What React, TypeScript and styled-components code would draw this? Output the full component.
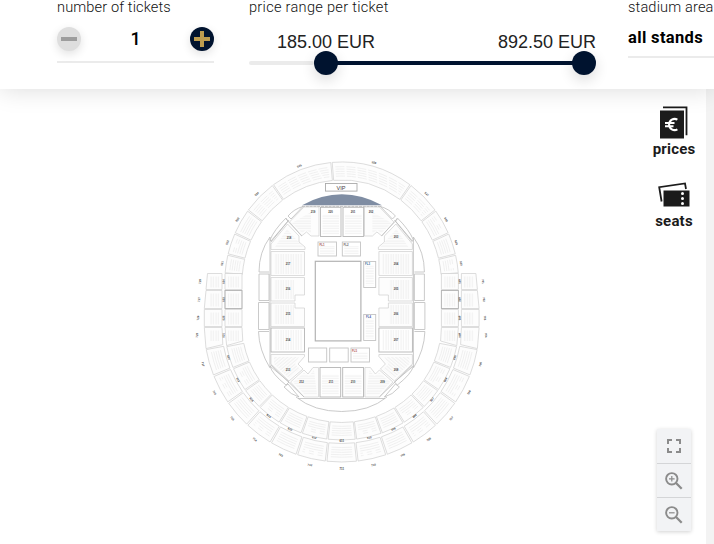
import React from "react";
import styled, { createGlobalStyle } from "styled-components";

const CX = 341.7;

type Ring = { cy: number; rx: number; ry: number };

const topOuter: Ring = { cy: 283, rx: 117, ry: 121 };
const topInner: Ring = { cy: 283, rx: 99.7, ry: 103 };
const lowInner: Ring = { cy: 325, rx: 99.7, ry: 97.5 };
const lowOuter: Ring = { cy: 325, rx: 117, ry: 115 };
const endInner: Ring = { cy: 325, rx: 120, ry: 118.5 };
const endOuter: Ring = { cy: 325, rx: 137.7, ry: 137 };

// 0 is the top of the ring, angles run clockwise
const at = (r: Ring, deg: number) => {
  const a = (deg * Math.PI) / 180;
  return `${(CX + r.rx * Math.sin(a)).toFixed(2)} ${(r.cy - r.ry * Math.cos(a)).toFixed(2)}`;
};

const block = (o: Ring, i: Ring, from: number, to: number) =>
  `M${at(o, from)}A${o.rx} ${o.ry} 0 0 1 ${at(o, to)}L${at(i, to)}A${i.rx} ${i.ry} 0 0 0 ${at(i, from)}Z`;

const topStops = [-85.5, -76.4, -65.8, -53.2, -36, -5, 36, 53.2, 65.8, 76.4, 85.5];
const lowStops = [100.5, 112, 124.5, 135.5, 148, 160, 173, 187, 200, 212, 224.5, 235.5, 248, 259.5];
const endStops = [100, 111.7, 124.5, 136.7, 149, 161, 173.5, 186.5, 199, 211, 223.3, 235.5, 248.3, 260];

const RingBlocks = ({ o, i, stops, first, labelGap }: { o: Ring; i: Ring; stops: number[]; first: number; labelGap: number }) => (
  <>
    {stops.slice(1).map((to, n) => {
      const from = stops[n];
      const mid = (from + to) / 2;
      const big = { cy: o.cy, rx: o.rx + labelGap, ry: o.ry + labelGap };
      const [x, y] = at(big, mid).split(" ").map(Number);
      const rows = [0.22, 0.35, 0.48, 0.61, 0.74].map((k) => ({
        cy: o.cy,
        rx: i.rx + (o.rx - i.rx) * k,
        ry: i.ry + (o.ry - i.ry) * k,
      }));
      return (
        <g key={to}>
          <Block d={block(o, i, from + 0.35, to - 0.35)} />
          {rows.map((r, k) => (
            <SeatRow
              key={k}
              dash={to - from > 15 ? "9 2" : k > 2 && n % 2 ? "5 4" : "none"}
              d={`M${at(r, from + 1.8)}A${r.rx} ${r.ry} 0 0 1 ${at(r, to - 1.8)}`}
            />
          ))}
          <Num x={x} y={y} transform={`rotate(${mid > 90 && mid < 270 ? mid - 180 : mid} ${x} ${y})`}>
            {first + n}
          </Num>
        </g>
      );
    })}
  </>
);

// sections of the left half, the right half is the same set flipped
const halfBlocks = [
  "M271 251.5H304.5V275.5H271Z",
  "M271 277.5H304.5V295H295V301H271Z",
  "M271 303H295V308H304.5V326.5H271Z",
  "M271 249.5V244L287.5 224L299 236V242L305 247V249.5Z",
  "M289.5 222L304 207H319V236H311L306.5 232L301.5 236Z",
  "M271 354.5H304.5V356.5L298 364L303 369L289 381L271 364Z",
  "M290.5 382L304 370L308 374L313 367.5H318.5V397H304Z",
];

const halfLines = [
  "M270 237V367",
  "M271 242L289 220",
  "M269 274H259V300.5H269Z",
  "M269 302.5H258.5V329.5H269Z",
  "M269 331.5H258.5Q259 350 270 368",
  "M270 237Q259 252 259 272H269",
  "M270 240Q274 230 286 218L288 221L271 241Z",
  "M288 216Q294 209 303 206.5L291 219Z",
  "M270 366Q272 374 286 385L289 382Z",
  "M284 387Q291 395 299 397L288 384Z",
  "M271 365L304 397M286 219L302 236",
];

const sideBlocks = [
  "M225 273.5H242V289.5H225Z",
  "M225 290.5H242V308.5H225Z",
  "M225 309.5H242V326.5H225Z",
  "M225 327.5H242L242.8 341L226.6 345.6Z",
  "M207.5 273.5H222V289.5H206Z",
  "M206 290.5H222V308.5H204.3Z",
  "M204.3 309.5H222V326.5H204.3Z",
  "M204.3 327.5H222L222.8 344.6L206 348.6Z",
];

const smallBoxes = [
  [318, 242, 18.5, 14],
  [342.3, 242, 18.2, 14],
  [363.7, 261.5, 12, 26],
  [363.7, 314.5, 12, 26],
  [308.5, 348, 18.2, 14],
  [329.7, 348, 18.5, 14],
  [351, 348, 18.5, 14],
];

const seatFills = [
  [274, 254, 28, 20],
  [274, 280, 20, 19],
  [274, 305, 20, 19],
  [274, 330, 28, 20],
  [382, 254, 28, 20],
  [389, 280, 21, 19],
  [389, 305, 21, 19],
  [382, 330, 28, 20],
];

const innerLabels: [number, number, string][] = [
  [313, 212, "219"], [330.5, 212, "220"], [353, 212, "201"], [371, 211.5, "202"],
  [289, 237.5, "218"], [396, 236.5, "203"], [288, 264, "217"], [396, 264, "204"],
  [288, 289, "216"], [396, 289, "205"], [288, 314, "215"], [396, 314, "206"],
  [288, 340, "214"], [396, 340, "207"], [288, 370, "213"], [396, 370, "208"],
  [301.5, 382, "212"], [331, 382, "211"], [353, 382, "210"], [382.5, 382, "209"],
];

const sideRows: [number, number][] = [[273.5, 289.5], [290.5, 308.5], [309.5, 326.5], [327.5, 343]];

const Half = () => (
  <>
    {halfBlocks.map((d) => (
      <Block key={d} d={d} />
    ))}
    {halfLines.map((d) => (
      <Outline key={d} d={d} />
    ))}
    <HatchShape d="M275 247L287 229L303 247Z" fill="url(#rows)" />
    <HatchShape d="M292 223L311 212V233L306 230L302 233Z" fill="url(#rows)" />
    <HatchShape d="M274 357H299L295 364L300 369L289 378L274 364Z" fill="url(#slant)" />
    <HatchShape d="M293 382L304 373L309 376L314 370L317 395H305Z" fill="url(#rows)" />
    {sideBlocks.map((d) => (
      <Block key={d} d={d} />
    ))}
    {sideRows.map(([a, b]) => (
      <g key={a}>
        <HatchShape d={`M228 ${a + 3}H239V${b - 2}H228Z`} fill="url(#cols)" />
        <HatchShape d={`M210 ${a + 3}H220V${b - 2}H210Z`} fill="url(#cols)" />
      </g>
    ))}
    <Frame x={225} y={290.5} width={17} height={18} />
    <Frame x={271} y={328} width={33.5} height={24} />
  </>
);

const StadiumMap = () => (
  <MapSvg viewBox="192 156 300 318">
    <defs>
      <pattern id="cols" width="2.5" height="4" patternUnits="userSpaceOnUse">
        <path d="M1 0V4" stroke="#e9e9e9" strokeWidth=".8" />
      </pattern>
      <pattern id="rows" width="4" height="2.5" patternUnits="userSpaceOnUse">
        <path d="M0 1H4" stroke="#e9e9e9" strokeWidth=".8" />
      </pattern>
      <pattern id="slant" width="4" height="2.5" patternUnits="userSpaceOnUse" patternTransform="rotate(-40)">
        <path d="M0 1H4" stroke="#e9e9e9" strokeWidth=".8" />
      </pattern>
    </defs>

    <RingBlocks o={topOuter} i={topInner} stops={topStops} first={521} labelGap={4} />
    <RingBlocks o={lowOuter} i={lowInner} stops={lowStops} first={605} labelGap={0.8} />
    <RingBlocks o={endOuter} i={endInner} stops={endStops} first={705} labelGap={6.5} />

    <Half />
    <g transform={`translate(${CX * 2} 0) scale(-1 1)`}>
      <Half />
    </g>

    {sideRows.map(([a, b], n) => {
      const y = (a + b) / 2;
      return (
        <g key={a}>
          <Num x={200 - n} y={y} transform={`rotate(-85 ${200 - n} ${y})`}>{728 - n}</Num>
          <Num x={223.5} y={y} transform={`rotate(-88 223.5 ${y})`}>{624 - n}</Num>
          <Num x={459.7} y={y} transform={`rotate(88 459.7 ${y})`}>{601 + n}</Num>
          <Num x={483 + n} y={y} transform={`rotate(85 ${483 + n} ${y})`}>{701 + n}</Num>
        </g>
      );
    })}

    <path d="M302 205.2Q341.7 183.5 382 205.2Z" fill="#7f8da3" />
    <path d="M302 206.3H382" stroke="#bcbcbc" strokeWidth="1" strokeDasharray="3 .8" />
    <Outline d="M296 397Q314 411.5 341.7 411.5T387 397" />
    <Outline d="M298 398.5H385" />

    {[
      [320.5, 207.3, 20.5, 29.2],
      [343, 207.3, 20.7, 29.2],
      [320, 367.5, 20.7, 29.5],
      [342.7, 367.5, 20.8, 29.5],
    ].map(([x, y, w, h]) => (
      <g key={`${x}-${y}`}>
        <Frame x={x} y={y} width={w} height={h} />
        <rect x={x + 2} y={y + 7} width={w - 4} height={h - 9} fill="url(#rows)" />
      </g>
    ))}
    {seatFills.map(([x, y, w, h]) => (
      <rect key={`${x}-${y}`} x={x} y={y} width={w} height={h} fill="url(#cols)" />
    ))}

    {smallBoxes.map(([x, y, w, h], n) => (
      <g key={n}>
        <SmallFrame x={x} y={y} width={w} height={h} />
        {n !== 4 && n !== 5 && (
          <rect x={x + 2} y={y + 4} width={w - 4} height={h - 6} fill="url(#rows)" />
        )}
      </g>
    ))}
    <SmallNum x={322} y={244.6} tint="#a05050">FL1</SmallNum>
    <SmallNum x={346} y={244.6} tint="#666">FL2</SmallNum>
    <SmallNum x={367.5} y={264.2} tint="#3d6f9a">FL3</SmallNum>
    <SmallNum x={368.5} y={317.2} tint="#4b5fa8">FL4</SmallNum>
    <SmallNum x={354.5} y={350.5} tint="#b85a5a">FL5</SmallNum>

    <Court x={315.3} y={261.3} width={45.6} height={79.6} />
    <rect x="325.5" y="183.5" width="31.5" height="7.6" fill="#fff" stroke="#aaa" strokeWidth=".9" />
    <VipText x={341} y={187.5}>VIP</VipText>

    {innerLabels.map(([x, y, t]) => (
      <Num key={t} x={x} y={y}>{t}</Num>
    ))}
  </MapSvg>
);

const PricesIcon = () => (
  <svg width="30" height="34" viewBox="0 0 30 34">
    <path d="M4 1.3H27.5V29.3" fill="none" stroke="#1b1b1b" strokeWidth="1.8" />
    <path d="M1 4.5H25V32.5H1Z" fill="#1b1b1b" />
    <path
      d="M18.4 13.6A5.6 5.6 0 1 0 18.4 23.4M6 17H15.5M6 20.2H14.5"
      fill="none"
      stroke="#fff"
      strokeWidth="2.1"
    />
  </svg>
);

const SeatsIcon = () => (
  <svg width="32" height="26" viewBox="0 0 32 26">
    <path d="M3.6 19.5L1.2 5.2L27 1.4L28 7" fill="none" stroke="#1b1b1b" strokeWidth="1.8" />
    <path d="M5.5 8.5H31.5V24.5H5.5Z" fill="#1b1b1b" />
    <g fill="#fff">
      <circle cx="24.5" cy="11.6" r="1.5" />
      <circle cx="24.5" cy="16.5" r="1.5" />
      <circle cx="24.5" cy="21.4" r="1.5" />
    </g>
  </svg>
);

const FullIcon = () => (
  <svg width="14" height="14" viewBox="0 0 14 14" fill="none" stroke="#8b8b8b" strokeWidth="2">
    <path d="M1 5V1H5M9 1H13V5M13 9V13H9M5 13H1V9" />
  </svg>
);

const ZoomIcon = ({ plus }: { plus?: boolean }) => (
  <svg width="18" height="18" viewBox="0 0 18 18" fill="none" stroke="#8b8b8b">
    <circle cx="6.8" cy="6.8" r="5.7" strokeWidth="1.9" />
    <path d="M11 11L16.7 16.7" strokeWidth="2.3" />
    <path d={plus ? "M4 6.8H9.6M6.8 4V9.6" : "M4 6.8H9.6"} strokeWidth="1.2" />
  </svg>
);

const App = () => {
  return (
    <Page>
      <Global />
      <Header>
        <Field w={157} gap={35}>
          <Label spacing={0.12}>number of tickets</Label>
          <Counter>
            <Round bg="#dedede" col="#9d9d9d">
              <svg width="16" height="16"><path d="M0 8H16" stroke="currentColor" strokeWidth="4" /></svg>
            </Round>
            <Amount>1</Amount>
            <Round bg="#00132f" col="#bc9c4f">
              <svg width="16" height="16"><path d="M0 8H16M8 0V16" stroke="currentColor" strokeWidth="4" /></svg>
            </Round>
          </Counter>
        </Field>
        <Field w={347} gap={32}>
          <Label spacing={0.28}>price range per ticket</Label>
          <Prices>
            <span>185.00 EUR</span>
            <span>892.50 EUR</span>
          </Prices>
          <Slider>
            <Rail />
            <Thumb />
            <Track />
            <Thumb />
          </Slider>
        </Field>
        <Field w={160} gap={0}>
          <Label spacing={0.15}>stadium area</Label>
          <Select>all stands</Select>
        </Field>
      </Header>
      <Main>
        <MapArea>
          <StadiumMap />
        </MapArea>
        <Tools>
          <Tool gap={0}>
            <PricesIcon />
            <ToolText>prices</ToolText>
          </Tool>
          <Tool gap={4}>
            <SeatsIcon />
            <ToolText>seats</ToolText>
          </Tool>
          <ZoomPanel>
            <ZoomButton><FullIcon /></ZoomButton>
            <ZoomButton><ZoomIcon plus /></ZoomButton>
            <ZoomButton><ZoomIcon /></ZoomButton>
          </ZoomPanel>
        </Tools>
        <Gutter />
      </Main>
    </Page>
  );
};

export default App;

const Global = createGlobalStyle`
  * {
    box-sizing: border-box;
  }
  body {
    margin: 0;
    overflow: hidden;
    background-color: #fff;
  }
`;
const Page = styled.div`
  width: 714px;
  height: 544px;
  overflow: hidden;
  display: flex;
  flex-direction: column;
  font-family: Roboto, sans-serif;
`;
const Header = styled.div`
  height: 89px;
  flex-shrink: 0;
  display: flex;
  padding-left: 57px;
  background-color: white;
  box-shadow: 0 0 24px rgba(0, 0, 0, 0.15);
  z-index: 1;
`;
const Field = styled.div<{ w: number; gap: number }>`
  width: ${({ w }) => w}px;
  margin-right: ${({ gap }) => gap}px;
  flex-shrink: 0;
`;
const Label = styled.div<{ spacing: number }>`
  height: 27px;
  line-height: 14px;
  font-size: 14.6px;
  font-weight: 300;
  letter-spacing: ${({ spacing }) => spacing}px;
  color: #111;
  white-space: nowrap;
`;
const Counter = styled.div`
  display: flex;
  justify-content: space-between;
  height: 36px;
  border-bottom: 2px solid #ebebeb;
`;
const Round = styled.div<{ bg: string; col: string }>`
  width: 24px;
  height: 24px;
  border-radius: 50%;
  display: flex;
  align-items: center;
  justify-content: center;
  background-color: ${({ bg }) => bg};
  color: ${({ col }) => col};
  box-shadow: 0 3px 10px rgba(0, 0, 0, 0.12);
`;
const Amount = styled.div`
  font-size: 18px;
  line-height: 24px;
  font-weight: 500;
  color: #000;
`;
const Prices = styled.div`
  display: flex;
  justify-content: space-between;
  height: 24px;
  padding: 4px 0 0 28px;
  font-family: "Liberation Sans", sans-serif;
  font-size: 18px;
  line-height: 22px;
  color: #222;
`;
const Slider = styled.div`
  display: flex;
  align-items: center;
  height: 24px;
`;
const Rail = styled.div`
  width: 65px;
  height: 4px;
  border-radius: 2px;
  background-color: #ebebeb;
`;
const Track = styled.div`
  flex: 1;
  height: 4px;
  margin: 0 -1px;
  background-color: #00132f;
`;
const Thumb = styled.div`
  width: 24px;
  height: 24px;
  border-radius: 50%;
  background-color: #00132f;
  box-shadow: 0 5px 14px rgba(0, 0, 0, 0.14);
`;
const Select = styled.div`
  height: 31px;
  line-height: 22px;
  font-size: 16.5px;
  font-weight: 700;
  letter-spacing: 0.35px;
  color: #000;
  border-bottom: 2px solid #ebebeb;
`;
const Main = styled.div`
  flex: 1;
  display: flex;
`;
const MapArea = styled.div`
  flex: 1;
  padding: 67px 0 0 192px;
`;
const MapSvg = styled.svg`
  display: block;
  width: 300px;
  height: 318px;
`;
const Tools = styled.div`
  width: 64px;
  display: flex;
  flex-direction: column;
  align-items: center;
  padding: 17px 0 13px;
`;
const Tool = styled.div<{ gap: number }>`
  display: flex;
  flex-direction: column;
  align-items: center;
  gap: ${({ gap }) => gap}px;
  margin-bottom: 24px;
`;
const ToolText = styled.div`
  font-size: 15px;
  line-height: 18px;
  font-weight: 700;
  letter-spacing: 0.2px;
  color: #1b1b1b;
`;
const ZoomPanel = styled.div`
  width: 34px;
  margin-top: auto;
  background-color: #f2f3f5;
  box-shadow: 0 1px 4px rgba(0, 0, 0, 0.18);
`;
const ZoomButton = styled.div`
  height: 34px;
  display: flex;
  align-items: center;
  justify-content: center;
  & + & {
    border-top: 1px solid #d4d5d7;
  }
`;
const Gutter = styled.div`
  width: 8px;
  background-color: #f3f3f3;
`;
const Block = styled.path`
  fill: #fdfdfd;
  stroke: #cfcfcf;
  stroke-width: 0.7;
`;
const SeatRow = styled.path<{ dash: string }>`
  fill: none;
  stroke: #eeeeee;
  stroke-width: 0.9;
  stroke-dasharray: ${({ dash }) => dash};
`;
const HatchShape = styled.path`
  stroke: none;
`;
const Outline = styled.path`
  fill: none;
  stroke: #bdbdbd;
  stroke-width: 0.8;
`;
const Frame = styled.rect`
  fill: none;
  stroke: #b5b5b5;
  stroke-width: 0.9;
`;
const SmallFrame = styled.rect`
  fill: #fff;
  stroke: #c4c4c4;
  stroke-width: 0.9;
`;
const Court = styled.rect`
  fill: #fff;
  stroke: #b3b3b3;
  stroke-width: 1.2;
`;
const Num = styled.text`
  font-family: "Liberation Sans", sans-serif;
  font-size: 2.8px;
  font-weight: 700;
  fill: #444;
  text-anchor: middle;
  dominant-baseline: central;
`;
const SmallNum = styled(Num)<{ tint: string }>`
  fill: ${({ tint }) => tint};
`;
const VipText = styled(Num)`
  font-size: 5.6px;
  font-weight: 400;
`;
